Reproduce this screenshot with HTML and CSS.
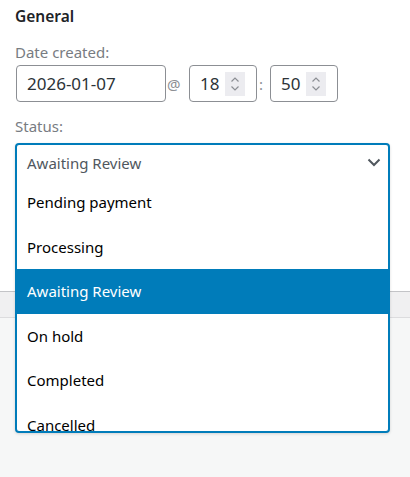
FILE: index.html
```html
<!DOCTYPE html>
<html>
<head>
<meta charset="utf-8">
<link rel="stylesheet" href="styles.css">
</head>
<body>
<div class="page">
  <div class="panel">
    <h3 class="heading">General</h3>
    <label class="label">Date created:</label>
    <div class="date-row">
      <div class="input date">2026-01-07</div>
      <span class="sep at">@</span>
      <div class="input num"><span class="val">18</span><span class="spin"><svg width="10" height="16" viewBox="0 0 10 16"><path d="M1.5 5.5 L5 2 L8.5 5.5 M1.5 10.5 L5 14 L8.5 10.5" fill="none" stroke="#8c8f94" stroke-width="1.2"/></svg></span></div>
      <span class="sep colon">:</span>
      <div class="input num"><span class="val">50</span><span class="spin"><svg width="10" height="16" viewBox="0 0 10 16"><path d="M1.5 5.5 L5 2 L8.5 5.5 M1.5 10.5 L5 14 L8.5 10.5" fill="none" stroke="#8c8f94" stroke-width="1.2"/></svg></span></div>
    </div>
    <label class="label status-label">Status:</label>
    <div class="select-wrap">
      <div class="select">
        <span class="select-val">Awaiting Review</span>
        <svg class="chev" width="14" height="9" viewBox="0 0 14 9"><path d="M1.5 1.5 L7 7 L12.5 1.5" fill="none" stroke="#50575e" stroke-width="2"/></svg>
      </div>
      <ul class="options">
        <li class="opt">Pending payment</li>
        <li class="opt">Processing</li>
        <li class="opt sel">Awaiting Review</li>
        <li class="opt">On hold</li>
        <li class="opt">Completed</li>
        <li class="opt">Cancelled</li>
        <li class="opt">Refunded</li>
      </ul>
    </div>
  </div>
  <div class="bar"></div>
  <div class="rest"></div>
</div>
</body>
</html>
```
FILE: styles.css
```css
* { box-sizing: border-box; }
html, body { margin: 0; padding: 0; }
body {
  font-family: "Noto Sans", "Open Sans", sans-serif;
  background: #f6f7f7;
  width: 410px;
  height: 477px;
  overflow: hidden;
}
.page { position: relative; }
.panel {
  background: #fff;
  height: 291px;
  padding: 6px 15px 0 15px;
}
.heading {
  margin: 0;
  font-size: 15.5px;
  font-weight: 600;
  color: #1d2327;
  line-height: 20px;
}
.label {
  display: block;
  margin-top: 16px;
  font-size: 15px;
  color: #787c82;
  line-height: 20px;
}
.date-row {
  display: flex;
  align-items: center;
  margin-top: 3px;
  height: 37px;
}
.input {
  height: 37px;
  border: 1px solid #8c8f94;
  border-radius: 4px;
  background: #fff;
  color: #2c3338;
  font-size: 17px;
  display: flex;
  align-items: center;
}
.date { width: 150px; padding-left: 10px; margin-left: 1px; }
.num { width: 68px; padding-left: 10px; gap: 6px; }
.sep { color: #8c8f94; font-size: 15px; }
.at { width: 23px; padding-left: 1px; }
.colon { width: 13px; padding-left: 2px; font-size: 15px; }
.spin {
  width: 20px;
  height: 24px;
  background: #ececf0;
  display: flex;
  align-items: center;
  justify-content: center;
}
.status-label { margin-top: 14px; }
.select-wrap {
  position: absolute;
  left: 15px;
  top: 143px;
  width: 375px;
  height: 290px;
  border: 2px solid #007cba;
  border-radius: 4px;
  background: #fff;
  overflow: hidden;
  box-shadow: 0 1px 3px rgba(0,0,0,0.15);
}
.select {
  height: 35px;
  display: flex;
  align-items: center;
  justify-content: space-between;
  padding: 0 7px 0 10px;
  font-size: 15px;
  color: #50575e;
}
.options { list-style: none; margin: 0; padding: 0; }
.opt {
  height: 44.5px;
  display: flex;
  align-items: center;
  padding-left: 10px;
  font-size: 15px;
  color: #000;
}
.opt.sel { background: #007cba; color: #fff; margin: 0 -2px; padding-left: 12px; }
.bar {
  height: 27px;
  background: #f0f0f1;
  border-top: 1px solid #c3c4c7;
  border-bottom: 1px solid #dcdcde;
}
.rest { height: 160px; background: #f6f7f7; }
```
